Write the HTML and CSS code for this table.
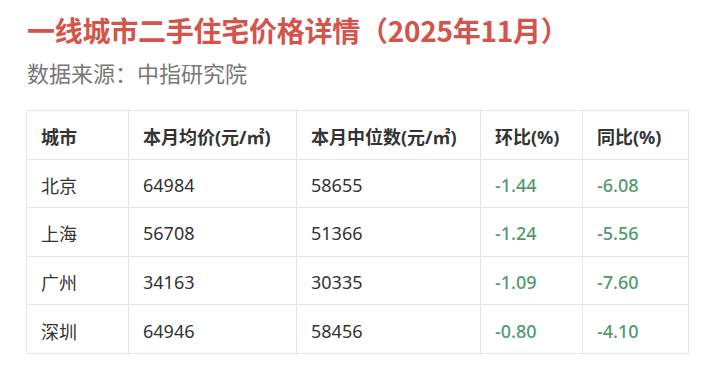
FILE: index.html
```html
<!DOCTYPE html>
<html lang="zh-CN">
<head>
<meta charset="utf-8">
<title>一线城市二手住宅价格详情</title>
<link rel="stylesheet" href="styles.css">
</head>
<body>
<div class="page">
  <h1 class="title">一线城市二手住宅价格详情（2025年11月）</h1>
  <p class="source">数据来源：中指研究院</p>
  <table class="data">
    <colgroup>
      <col class="c1"><col class="c2"><col class="c3"><col class="c4"><col class="c5">
    </colgroup>
    <thead>
      <tr><th>城市</th><th>本月均价(元/㎡)</th><th>本月中位数(元/㎡)</th><th>环比(%)</th><th>同比(%)</th></tr>
    </thead>
    <tbody>
      <tr><td>北京</td><td>64984</td><td>58655</td><td class="down">-1.44</td><td class="down">-6.08</td></tr>
      <tr><td>上海</td><td>56708</td><td>51366</td><td class="down">-1.24</td><td class="down">-5.56</td></tr>
      <tr><td>广州</td><td>34163</td><td>30335</td><td class="down">-1.09</td><td class="down">-7.60</td></tr>
      <tr><td>深圳</td><td>64946</td><td>58456</td><td class="down">-0.80</td><td class="down">-4.10</td></tr>
    </tbody>
  </table>
</div>
</body>
</html>
```
FILE: styles.css
```css
html, body {
  margin: 0;
  padding: 0;
  background: #ffffff;
}
body {
  font-family: "Noto Sans CJK SC", "Noto Sans", sans-serif;
  color: #333333;
}
.page {
  padding: 11px 16px 0 27px;
}
.title {
  margin: 0;
  font-size: 28px;
  line-height: 38px;
  font-weight: 700;
  letter-spacing: -0.25px;
  color: #d4534a;
}
.source {
  margin: 8px 0 0 0;
  font-size: 22px;
  line-height: 30px;
  color: #777777;
}
.data {
  margin: 23px 0 0 -1px;
  border-collapse: collapse;
  table-layout: fixed;
  width: 662px;
  font-family: "Noto Sans", "Noto Sans CJK SC", sans-serif;
  font-size: 18px;
}
.c1 { width: 102px; }
.c2 { width: 168px; }
.c3 { width: 184px; }
.c4 { width: 102px; }
.c5 { width: 106px; }
.data tr {
  height: 48.6px;
}
.data th, .data td {
  border: 1px solid #e6e6e6;
  padding: 3px 0 0 14px;
  text-align: left;
  white-space: nowrap;
}
.data th {
  font-weight: 700;
  color: #333333;
}
.data td {
  font-weight: 400;
}
.data td.down {
  color: #4f9a6e;
  font-weight: 500;
}
```
